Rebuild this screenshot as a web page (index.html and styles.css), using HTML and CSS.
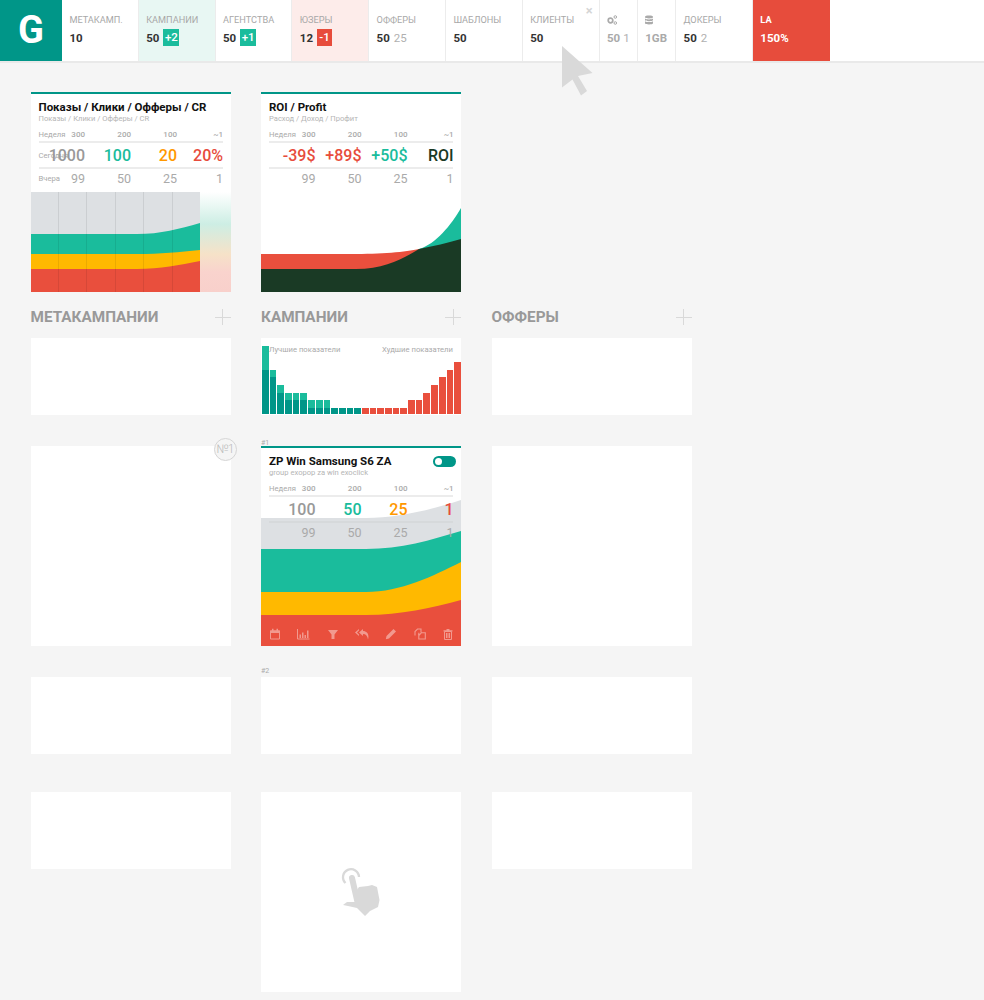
FILE: index.html
```html
<!DOCTYPE html>
<html lang="ru">
<head>
<meta charset="utf-8">
<title>Dashboard</title>
<link rel="stylesheet" href="styles.css">
</head>
<body>
<header class="topbar">
  <div class="logo">G</div>
  <div class="cell w77"><div class="lbl">Метакамп.</div><div class="val"><b>10</b></div></div>
  <div class="cell w77 tint-green"><div class="lbl">Кампании</div><div class="val"><b>50</b><span class="badge green">+2</span></div></div>
  <div class="cell w77"><div class="lbl">Агентства</div><div class="val"><b>50</b><span class="badge green">+1</span></div></div>
  <div class="cell w77 tint-red"><div class="lbl">Юзеры</div><div class="val"><b>12</b><span class="badge red">-1</span></div></div>
  <div class="cell w77"><div class="lbl">Офферы</div><div class="val"><b>50</b><span class="sec">25</span></div></div>
  <div class="cell w77"><div class="lbl">Шаблоны</div><div class="val"><b>50</b></div></div>
  <div class="cell w77"><div class="lbl">Клиенты</div><div class="val"><b>50</b></div><span class="close">×</span></div>
  <div class="cell w38"><div class="lbl icon-lbl">
    <svg width="10" height="10" viewBox="0 0 10 10"><circle cx="3.500" cy="5.500" r="2.300" fill="none" stroke="#aaa" stroke-width="1.700"/><circle cx="8.300" cy="2" r="1.300" fill="none" stroke="#aaa"/><circle cx="8.300" cy="8" r="1.300" fill="none" stroke="#aaa"/></svg>
  </div><div class="val muted"><b>50</b><span class="sec tight">1</span></div></div>
  <div class="cell w38"><div class="lbl icon-lbl">
    <svg width="8" height="10" viewBox="0 0 9 10"><path d="M0 1.300C0 .4 2 0 4.500 0S9 .4 9 1.300v.7C9 2.900 7 3.300 4.500 3.300S0 2.900 0 2zM0 3.300c1 .7 2.700 1 4.500 1s3.500-.3 4.500-1v1.700c0 .9-2 1.300-4.500 1.300S0 5.900 0 5zM0 6.300c1 .7 2.700 1 4.500 1s3.500-.3 4.500-1V8.700C9 9.600 7 10 4.500 10S0 9.600 0 8.700z" fill="#aaa"/></svg>
  </div><div class="val muted"><b>1GB</b></div></div>
  <div class="cell w77"><div class="lbl">Докеры</div><div class="val"><b>50</b><span class="sec">2</span></div></div>
  <div class="cell w77 danger"><div class="lbl">LA</div><div class="val"><b>150%</b></div></div>
</header>

<svg class="cursor" width="34" height="52" viewBox="0 0 34 52"><path d="M1 0L31.500 27 17 30 26 45 20 49.500 11.500 33.500 1 41.500z" fill="#d9d9d9"/></svg>

<main class="board">
  <section class="card stat">
    <h3>Показы / Клики / Офферы / CR</h3>
    <p class="sub">Показы / Клики / Офферы / CR</p>
    <div class="row week"><div class="c"><span class="rl">Неделя</span><span class="rv">300</span></div><span>200</span><span>100</span><span>~1</span></div>
    <div class="row main"><div class="c"><span class="rl">Сегодня</span><span class="rv gray">1000</span></div><span class="teal">100</span><span class="orange">20</span><span class="red-t">20%</span></div>
    <div class="row prev"><div class="c"><span class="rl">Вчера</span><span class="rv">99</span></div><span>50</span><span>25</span><span>1</span></div>
    <svg class="chart-b" width="200" height="100" viewBox="0 0 200 100">
      <defs><linearGradient id="fade" x1="0" y1="0" x2="0" y2="1"><stop offset="0" stop-color="#fff"/><stop offset=".32" stop-color="#cdeee4"/><stop offset=".62" stop-color="#f6e2c8"/><stop offset=".8" stop-color="#f9d3cd"/><stop offset="1" stop-color="#f8d0cb"/></linearGradient></defs>
      <rect x="169" width="31" height="100" fill="url(#fade)"/>
      <rect width="169" height="100" fill="#dde0e3"/>
      <path d="M0 42H106C130 42 148 37 169 31V100H0z" fill="#1abc9c"/>
      <path d="M0 62H106C130 62 148 60 169 58V100H0z" fill="#ffb900"/>
      <path d="M0 77H106C130 77 148 73 169 69V100H0z" fill="#e94f3d"/>
      <path d="M27.500 0V100M55.500 0V100M84.500 0V100M112.500 0V100M141.500 0V100" stroke="#000" stroke-opacity=".08"/>
    </svg>
  </section>

  <section class="card stat">
    <h3>ROI / Profit</h3>
    <p class="sub">Расход / Доход / Профит</p>
    <div class="row week"><div class="c"><span class="rl">Неделя</span><span class="rv">300</span></div><span>200</span><span>100</span><span>~1</span></div>
    <div class="row main"><div class="c"><span class="rv red-t">-39$</span></div><span class="red-t">+89$</span><span class="teal">+50$</span><span class="dark">ROI</span></div>
    <div class="row prev"><div class="c"><span class="rv">99</span></div><span>50</span><span>25</span><span>1</span></div>
    <svg class="chart-b" width="200" height="100" viewBox="0 0 200 100">
      <path d="M158 57C175 52 190 33 200 16V57z" fill="#1abc9c"/>
      <path d="M0 62H90C120 62 145 60 158 57L158 100H0z" fill="#e94f3d"/>
      <path d="M0 77H95C125 77 143 66 158 57C172 54 187 51 200 47V100H0z" fill="#1a3a25"/>
    </svg>
  </section>

  <div class="spacer"></div>

  <div class="head"><h2>Метакампании</h2><span class="plus"></span></div>
  <div class="head"><h2>Кампании</h2><span class="plus"></span></div>
  <div class="head"><h2>Офферы</h2><span class="plus"></span></div>

  <div class="card short"></div>
  <div class="card short bars">
    <div class="bars-text"><span>Лучшие показатели</span><span>Худшие показатели</span></div>
    <div class="bars-row">
      <div class="bar lt" style="height:68px"><i style="height:44px"></i></div>
      <div class="bar lt" style="height:44px"><i style="height:37px"></i></div>
      <div class="bar lt" style="height:29px"><i style="height:21px"></i></div>
      <div class="bar lt" style="height:21px"><i style="height:14px"></i></div>
      <div class="bar lt" style="height:21px"><i style="height:14px"></i></div>
      <div class="bar lt" style="height:21px"><i style="height:14px"></i></div>
      <div class="bar lt" style="height:14px"><i style="height:6px"></i></div>
      <div class="bar lt" style="height:14px"><i style="height:6px"></i></div>
      <div class="bar lt" style="height:14px"><i style="height:6px"></i></div>
      <div class="bar lt" style="height:6px"><i style="height:6px"></i></div>
      <div class="bar lt" style="height:6px"><i style="height:6px"></i></div>
      <div class="bar lt" style="height:6px"><i style="height:6px"></i></div>
      <div class="bar lt" style="height:6px"><i style="height:6px"></i></div>
      <div class="bar rd" style="height:6px"></div>
      <div class="bar rd" style="height:6px"></div>
      <div class="bar rd" style="height:6px"></div>
      <div class="bar rd" style="height:6px"></div>
      <div class="bar rd" style="height:6px"></div>
      <div class="bar rd" style="height:6px"></div>
      <div class="bar rd" style="height:14px"></div>
      <div class="bar rd" style="height:14px"></div>
      <div class="bar rd" style="height:21px"></div>
      <div class="bar rd" style="height:29px"></div>
      <div class="bar rd" style="height:37px"></div>
      <div class="bar rd" style="height:44px"></div>
      <div class="bar rd" style="height:52px"></div>
    </div>
  </div>
  <div class="card short"></div>

  <div class="card tall"><span class="num">№1</span></div>
  <section class="card stat tall campaign">
    <span class="idx">#1</span>
    <svg class="chart-full" width="200" height="150" viewBox="0 0 200 150">
      <path d="M0 22H105C135 22 170 14 200 4V150H0z" fill="#dde0e3"/>
      <path d="M0 53H105C140 53 170 44 200 35V150H0z" fill="#1abc9c"/>
      <path d="M0 96H105C140 96 172 80 200 66V150H0z" fill="#ffb900"/>
      <path d="M0 119H105C140 119 170 112 200 104V150H0z" fill="#e94f3d"/>
    </svg>
    <div class="title-row"><h3>ZP Win Samsung S6 ZA</h3><span class="toggle"></span></div>
    <p class="sub">group exopop za win exoclick</p>
    <div class="row week"><div class="c"><span class="rl">Неделя</span><span class="rv">300</span></div><span>200</span><span>100</span><span>~1</span></div>
    <div class="row main"><div class="c"><span class="rv gray">100</span></div><span class="teal">50</span><span class="orange">25</span><span class="red-t">1</span></div>
    <div class="row prev"><div class="c"><span class="rv">99</span></div><span>50</span><span>25</span><span>1</span></div>
    <div class="tools">
      <svg width="12" height="12" viewBox="0 0 12 12"><path d="M1.500 3h9v8h-9z" fill="none" stroke="#fff"/><path d="M1 2.500h10V5H1zM3 .8h1.500v2H3zM7.500 .8H9v2H7.500z" fill="#fff"/></svg>
      <svg width="13" height="12" viewBox="0 0 13 12"><path d="M.5 1v10h12" fill="none" stroke="#fff"/><path d="M2.500 6.500H4V10H2.500zM5 4.500h1.500V10H5zM7.500 7H9v3H7.500zM10 2.500h1.500V10H10z" fill="#fff"/></svg>
      <svg width="12" height="12" viewBox="0 0 12 12"><path d="M1 2h10L7.500 6.500V11h-3V6.500z" fill="#fff"/></svg>
      <svg width="14" height="12" viewBox="0 0 14 12"><path d="M4 1L0 4.500 4 8V6.500L2 4.500 4 2.500zM8 1L4 4.500 8 8V6C11 6 12.500 8 13 11.500 14.500 6.500 12 3 8 3z" fill="#fff"/></svg>
      <svg width="12" height="12" viewBox="0 0 12 12"><path d="M8.500 1l2.500 2.500-7 7-3.200.7.700-3.200z" fill="#fff"/></svg>
      <svg width="12" height="12" viewBox="0 0 12 12"><path d="M1 7.500V3.500L3.500 1H7v3.500M4.800 4.700V11h6.500V4.700H7.500L4.800 7.500" fill="none" stroke="#fff" stroke-width="1.100"/></svg>
      <svg width="12" height="12" viewBox="0 0 12 12"><path d="M2.500 3.500h7v8h-7z" fill="none" stroke="#fff"/><path d="M1.500 2.300h9v1.200h-9zM4.500 1h3v1.300h-3zM4 5h1v5H4zM5.500 5h1v5h-1zM7 5h1v5H7z" fill="#fff"/></svg>
    </div>
  </section>
  <div class="card tall"></div>

  <div class="card short"></div>
  <div class="card short"><span class="idx">#2</span></div>
  <div class="card short"></div>

  <div class="card short"></div>
  <div class="card tall hand-wrap">
    <svg width="60" height="60" viewBox="11 12 60 60">
      <path d="M25.500 33A8 8 0 1 1 39 27" fill="none" stroke="#d9d9d9" stroke-width="2.300"/>
      <path d="M32 28L37.500 52" stroke="#d9d9d9" stroke-width="6" stroke-linecap="round"/>
      <path d="M37 40L39 37 48 36 52 35 57 37 59.500 50 58 57 50 61 45 66 37 58 28 56 23 55 27 52 37 52z" fill="#d9d9d9"/>
    </svg>
  </div>
  <div class="card short"></div>
</main>
</body>
</html>
```
FILE: styles.css
```css
* { box-sizing: border-box; }
html, body { margin: 0; padding: 0; }
body {
  width: 984px;
  min-height: 1000px;
  overflow: hidden;
  background: #f5f5f5;
  font-family: Roboto, "Liberation Sans", sans-serif;
  color: #333;
  position: relative;
}

/* top bar */
.topbar {
  display: flex;
  height: 63px;
  background: #fff;
  border-bottom: 2px solid #e9e9e9;
}
.logo {
  width: 62px;
  height: 61px;
  flex: none;
  background: #009688;
  color: #fff;
  font-weight: 700;
  font-size: 38px;
  line-height: 61px;
  text-align: center;
}
.cell {
  position: relative;
  padding: 14px 0 0 7.400px;
  border-right: 1px solid #ececec;
  flex: none;
}
.w77 { width: 76.800px; }
.w38 { width: 38.300px; }
.lbl {
  font-size: 9.200px;
  line-height: 12px;
  height: 12px;
  color: #a8a8a8;
  text-transform: uppercase;
  white-space: nowrap;
}
.val {
  display: flex;
  align-items: center;
  height: 17px;
  margin-top: 3px;
  font-size: 11.500px;
  color: #333;
}
.val b { font-weight: 700; }
.sec { margin-left: 4px; color: #b0b0b0; font-weight: 400; }
.sec.tight { margin-left: 3px; }
.muted, .muted b { color: #aaa; }
.badge {
  margin-left: 4px;
  width: 16px;
  height: 17px;
  line-height: 17px;
  text-align: center;
  color: #fff;
  font-weight: 500;
}
.badge.green { background: #1abc9c; }
.badge.red { background: #e74c3c; width: 15px; }
.tint-green { background: #e8f7f3; }
.tint-red { background: #fdecea; }
.danger { background: #e74c3c; border-right-color: #e74c3c; }
.danger .lbl, .danger .val, .danger .val b { color: #fff; }
.danger .lbl { font-weight: 700; }
.icon-lbl { display: flex; align-items: center; }
.close {
  position: absolute;
  right: 6px;
  top: 4px;
  font-size: 13px;
  line-height: 14px;
  font-weight: 700;
  color: #d5d5d5;
}
.cursor { position: absolute; left: 560.500px; top: 46px; }

/* board */
.board {
  display: grid;
  grid-template-columns: repeat(3, 200px);
  grid-template-rows: 200px 20px 77px 200px 77px auto;
  column-gap: 30.500px;
  padding: 29px 0 0 30.500px;
  align-items: start;
}
.board > :nth-child(n+4):nth-child(-n+6) { margin-top: 15px; }
.board > :nth-child(n+7):nth-child(-n+9) { margin-top: 26px; }
.board > :nth-child(n+10):nth-child(-n+12) { margin-top: 57px; }
.board > :nth-child(n+13):nth-child(-n+15) { margin-top: 88px; }
.board > :nth-child(n+16) { margin-top: 126px; }
.spacer { height: 0; }

.card { background: #fff; position: relative; width: 200px; }
.short { height: 77px; }
.tall { height: 200px; }

.stat {
  height: 200px;
  padding: 6px 8px 0;
  border-top: 2px solid #009688;
}
.stat h3 {
  margin: 0;
  font-size: 11.500px;
  line-height: 14px;
  font-weight: 700;
  color: #111;
  position: relative;
  white-space: nowrap;
}
.sub {
  margin: 0 0 4px;
  font-size: 7.600px;
  line-height: 10px;
  color: #b5b5b5;
  position: relative;
  white-space: nowrap;
}
.row {
  display: grid;
  grid-template-columns: 46.500px 46px 46px 46px;
  justify-items: end;
  align-items: center;
  position: relative;
}
.c { display: grid; width: 100%; align-items: center; }
.c > span { grid-area: 1 / 1; }
.rl { justify-self: start; font-size: 7.700px; color: #aaa; font-weight: 400; white-space: nowrap; }
.rv { justify-self: end; }
.week { height: 15px; border-bottom: 2px solid #ececec; font-size: 8px; font-weight: 500; color: #aaa; }
.main { height: 26px; border-bottom: 2px solid #ececec; font-size: 16px; font-weight: 500; }
.campaign .main { border-bottom-color: rgba(0, 0, 0, .03); }
.prev { height: 18px; font-size: 12.500px; color: #aaa; font-weight: 400; }
.gray { color: #999; }
.teal { color: #1abc9c; }
.orange { color: #ff9800; }
.red-t { color: #e74c3c; }
.dark { color: #1a3a25; }

.chart-b, .chart-full { position: absolute; left: 0; bottom: 0; display: block; }

/* column headers */
.head { display: flex; justify-content: space-between; align-items: center; height: 20px; }
.head h2 {
  margin: 0;
  font-size: 15.300px;
  font-weight: 700;
  color: #999;
  text-transform: uppercase;
}
.plus {
  width: 16px;
  height: 16px;
  background:
    linear-gradient(#d9d9d9, #d9d9d9) center / 16px 1px no-repeat,
    linear-gradient(#d9d9d9, #d9d9d9) center / 1px 16px no-repeat;
}

/* bars */
.bars { display: flex; flex-direction: column; justify-content: flex-end; padding: 0 0 1px 1px; }
.bars-text {
  position: absolute;
  left: 8px;
  right: 8px;
  top: 7px;
  display: flex;
  justify-content: space-between;
  font-size: 7.700px;
  line-height: 10px;
  color: #aaa;
}
.bars-row { display: flex; align-items: flex-end; gap: 1px; height: 68px; }
.bar { flex: 1; display: flex; align-items: flex-end; }
.bar i { display: block; width: 100%; background: #009688; }
.lt { background: #1abc9c; }
.rd { background: #e94f3d; }

/* small things */
.num {
  position: absolute;
  top: -8px;
  right: -6px;
  width: 23px;
  height: 23px;
  border: 1.500px solid #d5d5d5;
  border-radius: 50%;
  background: #f5f5f5;
  color: #bbb;
  font-size: 12px;
  font-weight: 300;
  letter-spacing: -1px;
  line-height: 20px;
  text-align: center;
}
.idx {
  position: absolute;
  left: 0;
  top: -10px;
  font-size: 7px;
  line-height: 8px;
  color: #aaa;
}
.campaign .idx { top: -9px; }
.title-row { display: flex; justify-content: space-between; align-items: center; position: relative; }
.toggle {
  width: 23px;
  height: 11px;
  border-radius: 6px;
  background: #009688;
  position: relative;
  margin-right: -3px;
}
.toggle::before {
  content: "";
  position: absolute;
  left: 2px;
  top: 2px;
  width: 7px;
  height: 7px;
  border-radius: 50%;
  background: #fff;
}
.tools {
  position: absolute;
  left: 0;
  right: 0;
  bottom: 6px;
  display: flex;
  justify-content: space-between;
  padding: 0 7px 0 8px;
}
.tools svg { opacity: .42; }
.hand-wrap { display: flex; align-items: center; justify-content: center; }
```
